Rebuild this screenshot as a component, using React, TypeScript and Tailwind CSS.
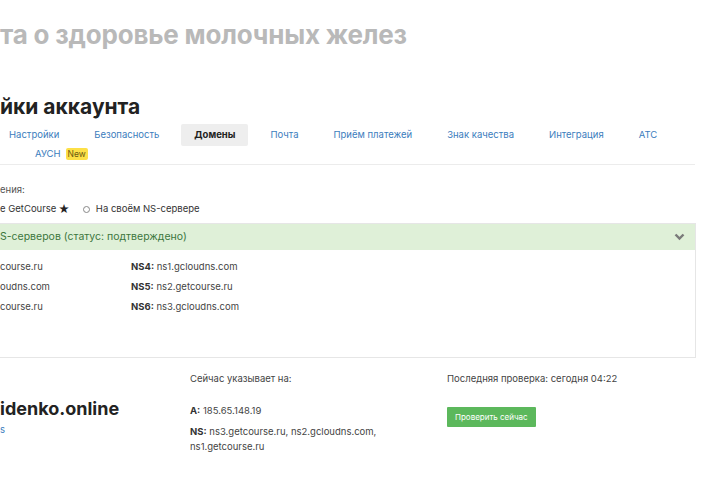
const tabs = [
  "Настройки",
  "Безопасность",
  "Домены",
  "Почта",
  "Приём платежей",
  "Знак качества",
  "Интеграция",
  "АТС",
];

const nsRows = [
  { left: "course.ru", label: "NS4:", value: "ns1.gcloudns.com" },
  { left: "oudns.com", label: "NS5:", value: "ns2.getcourse.ru" },
  { left: "course.ru", label: "NS6:", value: "ns3.gcloudns.com" },
];

export default function App() {
  return (
    <div className="h-[480px] w-[720px] overflow-hidden bg-white font-['Inter',sans-serif] text-[#333]">
      {/* page heading, scrolled past the left edge */}
      <h1 className="mt-[19px] whitespace-nowrap text-[26px] font-bold leading-[32px] tracking-[-0.2px] text-[#b9b9b9]">
        та о здоровье молочных желез
      </h1>

      <h2 className="mt-[42px] whitespace-nowrap text-[21px] font-bold leading-[28px] text-[#222]">
        йки аккаунта
      </h2>

      <div className="mr-[25px] border-b border-[#ececec]">
        <div className="-ml-[4px] mt-[3px] flex items-center gap-[9px] whitespace-nowrap text-[9.5px]">
          {tabs.map((tab) => {
            const isActive = tab === "Домены";
            return (
              <span
                key={tab}
                className={
                  isActive
                    ? "rounded-[2px] bg-[#eeeeee] px-[13px] py-[4px] font-bold text-[#222]"
                    : "px-[13px] py-[4px] text-[#3b7dbd]"
                }
              >
                {tab}
              </span>
            );
          })}
        </div>
        <div className="ml-[35px] mt-[1px] flex h-[17px] items-center gap-[5px] pb-[3px] text-[9.5px]">
          <span className="text-[#3b7dbd]">АУСН</span>
          <span className="rounded-[2px] bg-[#fde047] px-[2px] text-[8.5px] leading-[12px] text-[#6b5a10]">
            New
          </span>
        </div>
      </div>

      <div className="mt-[18px] text-[9.5px] leading-[14px] text-[#555]">ения:</div>
      <div className="mt-[5px] flex items-center whitespace-nowrap text-[9.5px] leading-[14px] text-[#333]">
        <span>e GetCourse</span>
        <span className="ml-[2px] text-[11px] text-[#222]">★</span>
        <span className="ml-[13px] h-[7px] w-[7px] rounded-full border border-[#888]" />
        <span className="ml-[6px]">На своём NS-сервере</span>
      </div>

      <div className="mr-[24px] mt-[7px] h-[135px] border border-l-0 border-[#e6e6e6]">
        <div className="flex h-[26px] items-center justify-between bg-[#dff0d8] pr-[10px] text-[10.5px] text-[#3c763d]">
          <span>S-серверов (статус: подтверждено)</span>
          <svg width="11" height="8" viewBox="0 0 11 8" aria-hidden="true">
            <path d="M1.5 1.5 L5.5 5.5 L9.5 1.5" fill="none" stroke="#7a7a7a" strokeWidth="2.4" />
          </svg>
        </div>
        <div className="mt-[10px] flex flex-col gap-[6px] text-[9.5px] leading-[14px] text-[#444]">
          {nsRows.map((row) => (
            <div key={row.label} className="flex">
              <span className="w-[131px]">{row.left}</span>
              <span>
                <b className="font-bold text-[#333]">{row.label}</b> {row.value}
              </span>
            </div>
          ))}
        </div>
      </div>

      <div className="mt-[14px] flex text-[9.5px] leading-[14px] text-[#444]">
        <div className="w-[190px] pt-[25px]">
          <div className="text-[18px] font-bold leading-[24px] text-[#222]">idenko.online</div>
          <div className="mt-[2px] text-[9.5px] text-[#3b7dbd]">s</div>
        </div>
        <div className="w-[257px]">
          <div>Сейчас указывает на:</div>
          <div className="mt-[18px]">
            <b className="font-bold text-[#333]">A:</b> 185.65.148.19
          </div>
          <div className="mt-[7px] flex flex-col gap-[1px]">
            <div>
              <b className="font-bold text-[#333]">NS:</b> ns3.getcourse.ru, ns2.gcloudns.com,
            </div>
            <div>ns1.getcourse.ru</div>
          </div>
        </div>
        <div>
          <div>Последняя проверка: сегодня 04:22</div>
          <button
            type="button"
            className="mt-[21px] h-[20px] rounded-[1px] bg-[#5cb85c] px-[8px] text-[8px] text-white"
          >
            Проверить сейчас
          </button>
        </div>
      </div>
    </div>
  );
}
